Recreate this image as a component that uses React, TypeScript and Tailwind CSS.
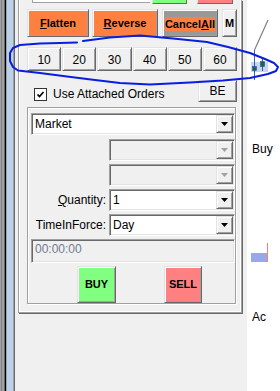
import React from "react";

const raised =
  "border border-t-[#e3e3e3] border-l-[#e3e3e3] border-r-[#696969] border-b-[#696969] shadow-[inset_1px_1px_0_#fff,inset_-1px_-1px_0_#a0a0a0]";
const sunken =
  "border border-t-[#a0a0a0] border-l-[#a0a0a0] border-r-white border-b-white shadow-[inset_1px_1px_0_#696969,inset_-1px_-1px_0_#e3e3e3]";

const Arrow = ({ disabled }: { disabled?: boolean }) => (
  <div className={`flex w-[17px] shrink-0 items-center justify-center bg-[#f0f0f0] ${raised}`}>
    <svg width="7" height="4" viewBox="0 0 7 4">
      <polygon points="0,0 7,0 3.5,4" fill={disabled ? "#a0a0a0" : "#000"} />
    </svg>
  </div>
);

const Combo = ({ value, disabled, className = "" }: { value?: string; disabled?: boolean; className?: string }) => (
  <div className={`flex h-[22px] p-px ${sunken} ${disabled ? "bg-[#f0f0f0]" : "bg-white"} ${className}`}>
    <div className="flex flex-1 items-center pl-[2px] leading-[14px]">{value}</div>
    <Arrow disabled={disabled} />
  </div>
);

const FieldRow = ({ label, children }: { label?: React.ReactNode; children: React.ReactNode }) => (
  <div className="flex h-[22px] items-center">
    <div className="w-[78px] pr-[3px] text-right">{label}</div>
    {children}
  </div>
);

const Ellipse = () => (
  <svg className="pointer-events-none absolute left-0 top-0" width="280" height="391" viewBox="0 0 280 391">
    <polyline
      fill="none"
      stroke="#0a1ee0"
      strokeWidth="2"
      strokeLinecap="round"
      strokeLinejoin="round"
      points="83,41 110,37.5 140,35.5 173,38.5 207,42 228,47 250,53 265,59 274,63 278,67 276,71 268,74 250,78 223,80.5 190,82.5 150,84.5 120,83 95,80 67,76.5 40,73 18,70.5 13,67 10,61 10,53 13,48 20,45 40,43.5 60,43 77,42.5"
    />
  </svg>
);

export default function App() {
  return (
    <div className="relative flex h-[391px] w-[280px] overflow-hidden bg-white font-['Liberation_Sans',Arial,sans-serif] text-[12px] text-black">
      {/* window frame on the left */}
      <div className="flex h-full shrink-0">
        <div className="w-px bg-[#a0a0a0]" />
        <div className="w-px bg-[#808080]" />
        <div className="w-[2px] bg-[#a0a0a0]" />
        <div className="w-px bg-[#696969]" />
        <div className="w-px bg-black" />
        <div className="w-px bg-[#a0a0a0]" />
        <div className="w-[6px] bg-[#b9d1ea]" />
        <div className="w-px bg-[#a0a0a0]" />
        <div className="w-px bg-[#696969]" />
      </div>

      {/* order panel */}
      <div className="h-full w-[232px] shrink-0 bg-[#f0f0f0] pl-[3px]">
        <div className="w-[224px] border-x border-b border-[#a0a0a0] shadow-[1px_1px_0_#696969]">
          <div className="border-x border-b border-white pb-[7px] pl-[7px] pr-[3px]">
            {/* bottoms of the controls above */}
            <div className="flex h-[4px] items-start">
              <div className="ml-[5px] h-[3px] w-[118px] border-b border-l border-[#a0a0a0] bg-white" />
              <div className="ml-[2px] h-[4px] w-[35px] border-b border-l border-r border-b-[#696969] border-l-[#e3e3e3] border-r-[#696969] bg-[#80ff80]" />
              <div className="ml-[10px] h-[4px] w-[36px] border-b border-l border-r border-b-[#696969] border-l-[#e3e3e3] border-r-[#696969] bg-[#ff8080]" />
            </div>

            <div className="mt-[5px] flex h-[28px] text-[11px] font-bold">
              <button className={`w-[62px] bg-[#ff8040] ${raised}`}>
                <u>F</u>latten
              </button>
              <button className={`ml-[3px] w-[66px] bg-[#ff8040] ${raised}`}>
                <u>R</u>everse
              </button>
              <button className={`ml-[4px] flex w-[56px] items-center justify-center bg-[#999999] pt-[2px] ${raised}`}>
                <span className="bg-[#ff8040] leading-[14px]">
                  Cancel<u>A</u>ll
                </span>
              </button>
              <button className={`ml-[4px] w-[15px] bg-[#f0f0f0] ${raised}`}>M</button>
            </div>

            <div className="mt-[10px] grid h-[24px] grid-cols-6 gap-px">
              {["10", "20", "30", "40", "50", "60"].map((n) => (
                <button key={n} className={`bg-[#f0f0f0] pt-[2px] ${raised}`}>
                  {n}
                </button>
              ))}
            </div>

            <div className="mt-[9px] flex h-[22px] items-start">
              <div className="ml-[7px] mt-[7px] flex items-center">
                <div className="flex h-[13px] w-[13px] items-center justify-center border border-[#333] bg-white">
                  <svg width="9" height="9" viewBox="0 0 9 9">
                    <polyline points="1.5,4.5 3.5,6.5 7.5,2" fill="none" stroke="#000" strokeWidth="1.7" />
                  </svg>
                </div>
                <span className="ml-[6px] leading-[14px]">Use Attached Orders</span>
              </div>
              <button className={`ml-auto h-[22px] w-[39px] bg-[#f0f0f0] ${raised}`}>BE</button>
            </div>

            {/* order group */}
            <div className="mt-[5px] w-[209px] border border-[#a0a0a0] pl-[3px] pt-[5px] shadow-[1px_1px_0_#fff,inset_1px_1px_0_#fff]">
              <Combo value="Market" className="w-[204px]" />
              <div className="mt-[4px] flex flex-col gap-[3px]">
                <FieldRow>
                  <Combo disabled className="w-[126px]" />
                </FieldRow>
                <FieldRow>
                  <Combo disabled className="w-[126px]" />
                </FieldRow>
                <FieldRow
                  label={
                    <>
                      <u>Q</u>uantity:
                    </>
                  }
                >
                  <Combo value="1" className="w-[126px]" />
                </FieldRow>
                <FieldRow label="TimeInForce:">
                  <Combo value="Day" className="w-[126px]" />
                </FieldRow>
              </div>
              <div className={`mt-[3px] h-[24px] w-[204px] bg-[#f0f0f0] pl-[3px] pt-[2px] leading-[14px] text-[#6f7a92] ${sunken}`}>
                00:00:00
              </div>
              <div className="mt-[3px] flex h-[37px] text-[11px] font-bold">
                <button className={`ml-[46px] w-[39px] bg-[#80ff80] ${raised}`}>BUY</button>
                <button className={`ml-[48px] w-[38px] bg-[#ff8080] ${raised}`}>SELL</button>
              </div>
            </div>
          </div>
        </div>
      </div>

      {/* chart edge on the right */}
      <div className="relative h-full flex-1 bg-white">
        <svg className="absolute left-0 top-0" width="33" height="391" viewBox="0 0 33 391">
          <line x1="21" y1="20" x2="7.5" y2="50" stroke="#808080" strokeWidth="1.2" />
          <rect x="4" y="62" width="17" height="10" fill="#c6d6f0" />
          <line x1="7.5" y1="50" x2="7.5" y2="80" stroke="#3a5ac8" strokeWidth="1" />
          <line x1="15.5" y1="58" x2="15.5" y2="71" stroke="#3a5ac8" strokeWidth="1" />
          <rect x="5.5" y="66.5" width="4" height="4" fill="#1a6b3a" stroke="#2a4aa8" strokeWidth="0.6" />
          <rect x="13.5" y="61.5" width="4" height="5" fill="#1a6b3a" stroke="#2a4aa8" strokeWidth="0.6" />
          <rect x="4" y="253" width="16" height="9" fill="#98a8e8" />
          <line x1="20.5" y1="243" x2="20.5" y2="262" stroke="#f08080" strokeWidth="1" />
        </svg>
        <div className="absolute left-[5px] top-[141px] leading-[16px]">Buy</div>
        <div className="absolute left-[5px] top-[309px] leading-[16px]">Ac</div>
      </div>

      <Ellipse />
    </div>
  );
}
